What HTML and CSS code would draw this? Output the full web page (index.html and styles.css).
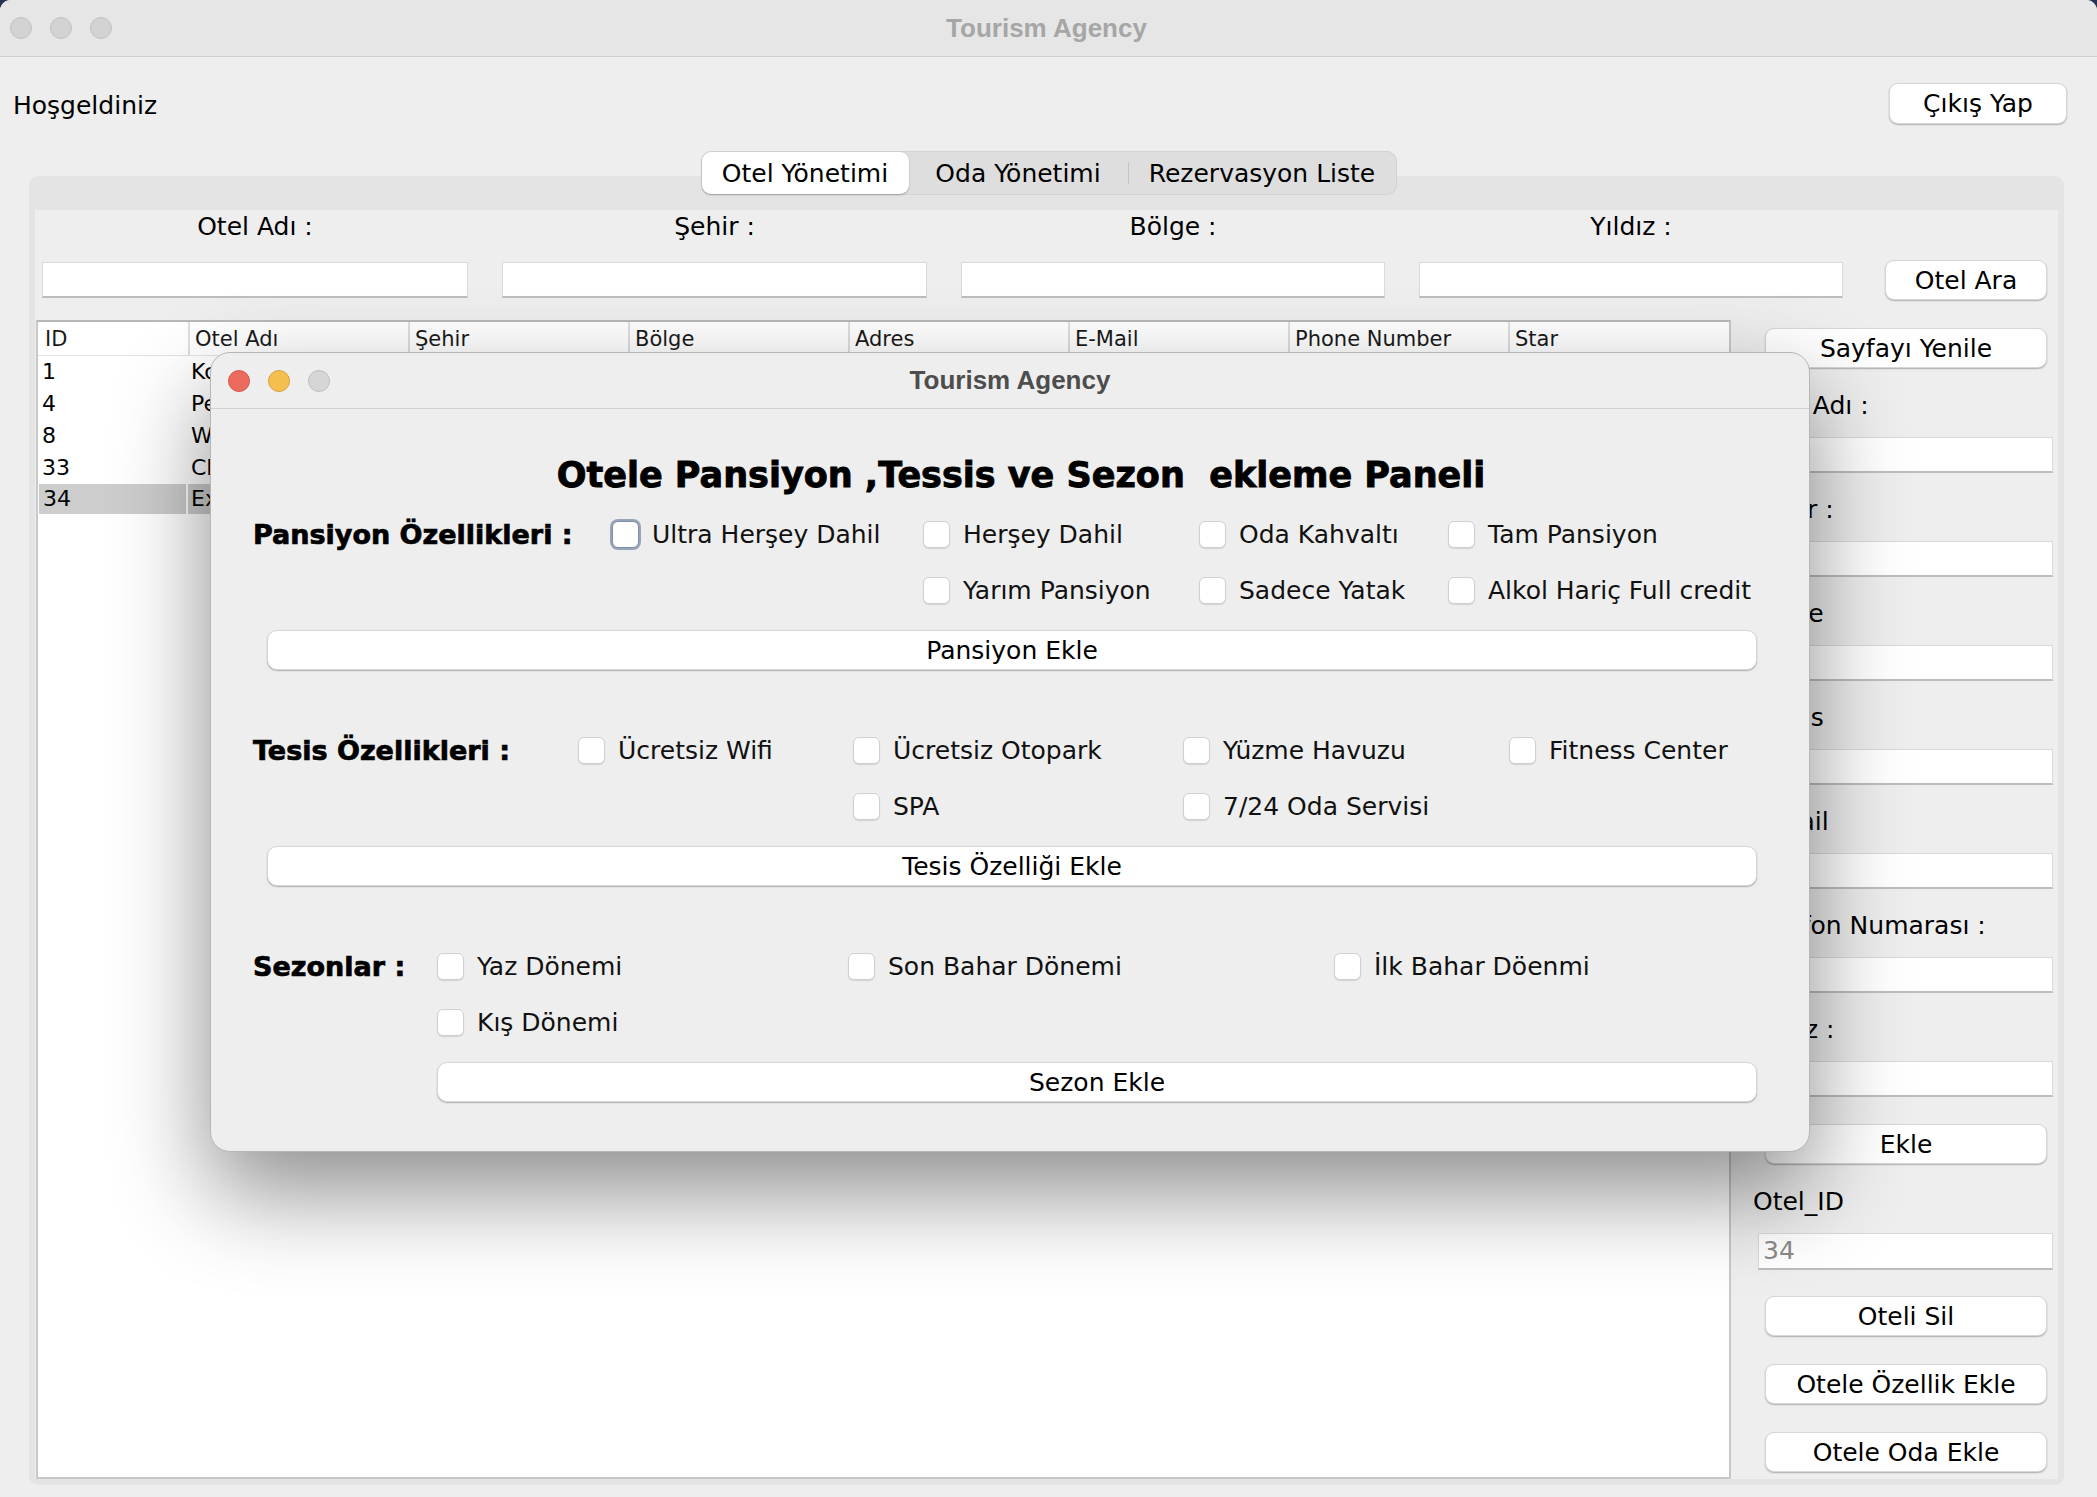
FILE: index.html
```html
<!DOCTYPE html>
<html lang="tr">
<head>
<meta charset="utf-8">
<title>Tourism Agency</title>
<link rel="stylesheet" href="styles.css">
</head>
<body>
<div class="window">
  <header class="titlebar">
    <div class="lights">
      <span class="light"></span>
      <span class="light"></span>
      <span class="light"></span>
    </div>
    <div class="title">Tourism Agency</div>
    <div></div>
  </header>

  <div class="topbar">
    <span class="welcome">Hoşgeldiniz</span>
    <button class="btn logout">Çıkış Yap</button>
  </div>

  <nav class="tabs">
    <div class="seg seg-otel active">Otel Yönetimi</div>
    <div class="seg seg-oda">Oda Yönetimi</div>
    <span class="seg-divider"></span>
    <div class="seg seg-rez">Rezervasyon Liste</div>
  </nav>

  <section class="tabpanel">
    <div class="panel-body">
      <div class="search">
        <div class="search-label">Otel Adı :</div>
        <div class="search-label">Şehir :</div>
        <div class="search-label">Bölge :</div>
        <div class="search-label">Yıldız :</div>
        <div></div>
        <div class="field"></div>
        <div class="field"></div>
        <div class="field"></div>
        <div class="field"></div>
        <button class="btn search-btn">Otel Ara</button>
      </div>

      <div class="main">
        <div class="table">
          <div class="th th-first">ID</div>
          <div class="th">Otel Adı</div>
          <div class="th">Şehir</div>
          <div class="th">Bölge</div>
          <div class="th">Adres</div>
          <div class="th">E-Mail</div>
          <div class="th">Phone Number</div>
          <div class="th">Star</div>

          <div class="td td-first">1</div><div class="td">Konak</div><div class="td"></div><div class="td"></div><div class="td"></div><div class="td"></div><div class="td"></div><div class="td"></div>
          <div class="td td-first">4</div><div class="td">Pera</div><div class="td"></div><div class="td"></div><div class="td"></div><div class="td"></div><div class="td"></div><div class="td"></div>
          <div class="td td-first">8</div><div class="td">Wyndham</div><div class="td"></div><div class="td"></div><div class="td"></div><div class="td"></div><div class="td"></div><div class="td"></div>
          <div class="td td-first">33</div><div class="td">Clarion</div><div class="td"></div><div class="td"></div><div class="td"></div><div class="td"></div><div class="td"></div><div class="td"></div>
          <div class="td td-first sel">34</div><div class="td sel">Example</div><div class="td sel"></div><div class="td sel"></div><div class="td sel"></div><div class="td sel"></div><div class="td sel"></div><div class="td sel"></div>
        </div>

        <aside class="side">
          <button class="btn side-btn refresh">Sayfayı Yenile</button>
          <div class="side-label first-label">Otel Adı :</div>
          <div class="field side-field"></div>
          <div class="side-label">Şehir :</div>
          <div class="field side-field"></div>
          <div class="side-label">Bölge</div>
          <div class="field side-field"></div>
          <div class="side-label">Adres</div>
          <div class="field side-field"></div>
          <div class="side-label">E-Mail</div>
          <div class="field side-field"></div>
          <div class="side-label">Telefon Numarası :</div>
          <div class="field side-field"></div>
          <div class="side-label">Yıldız :</div>
          <div class="field side-field"></div>
          <button class="btn side-btn add">Ekle</button>
          <div class="side-label id-label">Otel_ID</div>
          <div class="field side-field id-field">34</div>
          <button class="btn side-btn del">Oteli Sil</button>
          <button class="btn side-btn act">Otele Özellik Ekle</button>
          <button class="btn side-btn act">Otele Oda Ekle</button>
        </aside>
      </div>
    </div>
  </section>

  <div class="dialog">
    <header class="dlg-titlebar">
      <div class="lights">
        <span class="light red"></span>
        <span class="light yellow"></span>
        <span class="light gray"></span>
      </div>
      <div class="dlg-title">Tourism Agency</div>
      <div></div>
    </header>
    <div class="dlg-body">
      <h1 class="heading">Otele Pansiyon ,Tessis ve Sezon  ekleme Paneli</h1>

      <div class="sec sec-pansiyon">
        <div class="sec-label">Pansiyon Özellikleri :</div>
        <label class="check focused"><span class="cb"></span>Ultra Herşey Dahil</label>
        <label class="check"><span class="cb"></span>Herşey Dahil</label>
        <label class="check"><span class="cb"></span>Oda Kahvaltı</label>
        <label class="check"><span class="cb"></span>Tam Pansiyon</label>
        <label class="check r2 c3"><span class="cb"></span>Yarım Pansiyon</label>
        <label class="check r2 c4"><span class="cb"></span>Sadece Yatak</label>
        <label class="check r2 c5"><span class="cb"></span>Alkol Hariç Full credit</label>
        <button class="btn dlg-btn">Pansiyon Ekle</button>
      </div>

      <div class="sec sec-tesis">
        <div class="sec-label">Tesis Özellikleri :</div>
        <label class="check"><span class="cb"></span>Ücretsiz Wifi</label>
        <label class="check"><span class="cb"></span>Ücretsiz Otopark</label>
        <label class="check"><span class="cb"></span>Yüzme Havuzu</label>
        <label class="check"><span class="cb"></span>Fitness Center</label>
        <label class="check r2 c3"><span class="cb"></span>SPA</label>
        <label class="check r2 c4"><span class="cb"></span>7/24 Oda Servisi</label>
        <button class="btn dlg-btn">Tesis Özelliği Ekle</button>
      </div>

      <div class="sec sec-sezon">
        <div class="sec-label">Sezonlar :</div>
        <label class="check"><span class="cb"></span>Yaz Dönemi</label>
        <label class="check"><span class="cb"></span>Son Bahar Dönemi</label>
        <label class="check"><span class="cb"></span>İlk Bahar Döenmi</label>
        <label class="check r2 c2"><span class="cb"></span>Kış Dönemi</label>
        <button class="btn dlg-btn sezon-btn">Sezon Ekle</button>
      </div>
    </div>
  </div>
</div>
</body>
</html>
```

FILE: styles.css
```css
* { box-sizing: border-box; }

html, body {
  margin: 0;
  padding: 0;
}

body {
  width: 2097px;
  height: 1497px;
  overflow: hidden;
  background: #263352;
  font-family: "DejaVu Sans", "Noto Sans", sans-serif;
  font-size: 25px;
  color: #000;
}

.window {
  position: relative;
  width: 2097px;
  height: 1497px;
  background: #eeeeee;
  border-radius: 11px 11px 0 0;
  overflow: hidden;
  display: flex;
  flex-direction: column;
}

/* ---------- title bars ---------- */
.titlebar {
  flex: none;
  height: 57px;
  display: grid;
  grid-template-columns: 1fr auto 1fr;
  align-items: center;
  padding: 0 10px;
  background: #e6e6e6;
  border-bottom: 1px solid #cfcfcf;
}

.lights {
  display: flex;
  align-items: center;
  gap: 18px;
}

.light {
  width: 22px;
  height: 22px;
  border-radius: 50%;
  background: #d3d3d3;
  border: 1px solid #c3c3c3;
}

.light.red { background: #ed6a5e; border-color: #d5574c; }
.light.yellow { background: #f5bf4f; border-color: #d9a33d; }
.light.gray { background: #d6d6d6; border-color: #bfbfbf; }

.title,
.dlg-title {
  font-family: "Liberation Sans", Arial, sans-serif;
  font-weight: 700;
  font-size: 26px;
  color: #a6a6a6;
}

.title { margin-right: 4px; }

.dlg-title { color: #4d4d4d; }

/* ---------- buttons / fields ---------- */
.btn {
  font: inherit;
  color: #000;
  background: #ffffff;
  border: 1px solid #d6d6d6;
  border-radius: 9px;
  box-shadow: 0 1px 1.5px rgba(0, 0, 0, 0.28);
  padding: 0;
  display: flex;
  align-items: center;
  justify-content: center;
  white-space: nowrap;
}

.field {
  height: 36px;
  background: #ffffff;
  border: 1px solid #dadada;
  border-bottom: 2px solid #bdbdbd;
}

/* ---------- top bar ---------- */
.topbar {
  flex: none;
  display: flex;
  justify-content: space-between;
  align-items: center;
  height: 41px;
  margin: 26px 30px 0 13px;
}

.welcome { padding-top: 3px; }

.logout {
  width: 178px;
  height: 41px;
}

/* ---------- tabs ---------- */
.tabs {
  flex: none;
  align-self: center;
  display: flex;
  align-items: center;
  height: 44px;
  margin-top: 27px;
  background: #dedede;
  border: 1px solid #d3d3d3;
  border-radius: 10px;
  position: relative;
  z-index: 1;
}

.seg {
  height: 42px;
  display: flex;
  align-items: center;
  justify-content: center;
  white-space: nowrap;
}

.seg-otel { width: 207px; }
.seg-oda { width: 219px; }
.seg-rez { width: 267px; }

.seg.active {
  background: #ffffff;
  border-radius: 9px;
  box-shadow: 0 1px 2px rgba(0, 0, 0, 0.28);
}

.seg-divider {
  width: 1px;
  height: 22px;
  background: #c4c4c4;
}

/* ---------- tab panel ---------- */
.tabpanel {
  flex: 1;
  display: flex;
  margin: -19px 33px 12px 29px;
  padding: 34px 6px 6px 6px;
  background: #e4e4e4;
  border-radius: 9px;
  min-height: 0;
}

.panel-body {
  flex: 1;
  display: flex;
  flex-direction: column;
  background: #eeeeee;
  min-height: 0;
}

.search {
  flex: none;
  display: grid;
  grid-template-columns: 426px 425px 424px 424px 170px;
  grid-template-rows: 34px 40px;
  column-gap: 34px;
  row-gap: 16px;
  padding-left: 7px;
}

.search-label {
  text-align: center;
  line-height: 34px;
}

.search .field { align-self: center; }

.search-btn {
  justify-self: end;
  width: 162px;
  height: 40px;
}

.main {
  flex: 1;
  display: grid;
  grid-template-columns: 1695px 301px;
  column-gap: 21px;
  margin-top: 20px;
  padding-left: 1px;
  min-height: 0;
}

/* ---------- table ---------- */
.table {
  background: #ffffff;
  border: 2px solid #c8c8c8;
  border-top-color: #b8b8b8;
  display: grid;
  grid-template-columns: 150px repeat(6, 220px) 1fr;
  grid-template-rows: 34px;
  grid-auto-rows: 32px;
  align-content: start;
  overflow: hidden;
}

.th {
  display: flex;
  align-items: center;
  font-size: 21px;
  line-height: 26px;
  color: #1a1a1a;
  padding-left: 5px;
  border-left: 2px solid #dedede;
  border-bottom: 1px solid #e3e3e3;
  white-space: nowrap;
}

.th-first {
  border-left: none;
  padding-left: 7px;
}

.td {
  font-size: 22px;
  line-height: 32px;
  padding-left: 3px;
  white-space: nowrap;
  overflow: hidden;
}

.td-first { padding-left: 4px; }

.td.sel {
  background: #cdcdcd;
  background-clip: padding-box;
  border-right: 2px solid transparent;
  border-bottom: 2px solid transparent;
  line-height: 30px;
}

.td-first.sel { margin-left: 1px; }

/* ---------- side column ---------- */
.side {
  display: flex;
  flex-direction: column;
}

.side-btn {
  height: 40px;
  margin: 0 6px 0 13px;
  flex: none;
}

.refresh { margin-top: 8px; }

.side-label {
  flex: none;
  height: 34px;
  line-height: 34px;
  margin: 20px 0 0 1px;
  white-space: nowrap;
}

.side-label.first-label { margin-top: 21px; }

.side-field {
  flex: none;
  margin: 14px 0 0 6px;
}

.add { margin-top: 27px; }

.side-label.id-label { margin-top: 21px; }

.id-field {
  height: 37px;
  color: #8a8a8a;
  padding-left: 4px;
  line-height: 34px;
}

.del { margin-top: 26px; }
.act { margin-top: 28px; }

/* ---------- dialog ---------- */
.dialog {
  position: absolute;
  left: 210px;
  top: 352px;
  width: 1600px;
  height: 800px;
  display: flex;
  flex-direction: column;
  background: #eeeeee;
  border: 1px solid #b6b6b6;
  border-radius: 20px;
  box-shadow: 0 40px 95px rgba(0, 0, 0, 0.45);
  z-index: 5;
}

.dlg-titlebar {
  flex: none;
  height: 56px;
  display: grid;
  grid-template-columns: 1fr auto 1fr;
  align-items: center;
  padding: 0 17px;
  border-bottom: 1px solid #d2d2d2;
}

.dlg-body {
  padding: 41px 52px 0 42px;
}

.heading {
  margin: 0;
  padding-left: 32px;
  font-family: "DejaVu Sans", sans-serif;
  font-weight: 700;
  font-size: 35px;
  line-height: 50px;
  text-align: center;
  white-space: pre;
  -webkit-text-stroke: 0.9px #000;
}

.sec {
  display: grid;
  grid-template-rows: 40px 40px 44px;
  row-gap: 16px;
  margin-top: 60px;
}

.sec-pansiyon {
  margin-top: 14px;
  grid-template-columns: 357px 313px 276px 249px 309px;
}

.sec-tesis {
  grid-template-columns: 325px 275px 330px 326px 248px;
}

.sec-sezon {
  grid-template-columns: 184px 411px 486px 423px;
}

.sec-label {
  grid-row: 1;
  grid-column: 1;
  align-self: center;
  font-weight: 700;
  font-size: 27px;
  white-space: nowrap;
  -webkit-text-stroke: 0.7px #000;
}

.check {
  grid-row: 1;
  display: flex;
  align-items: center;
  gap: 13px;
  white-space: nowrap;
  color: #111;
}

.check.r2 { grid-row: 2; }
.check.c2 { grid-column: 2; }
.check.c3 { grid-column: 3; }
.check.c4 { grid-column: 4; }
.check.c5 { grid-column: 5; }

.cb {
  flex: none;
  width: 27px;
  height: 27px;
  background: #ffffff;
  border: 1px solid #d0d0d0;
  border-radius: 6px;
  box-shadow: 0 1px 1px rgba(0, 0, 0, 0.12);
}

.check.focused .cb {
  margin-left: 2px;
  border-color: #7f8ea3;
  box-shadow: 0 0 0 2px #97a5b9;
}

.dlg-btn {
  grid-row: 3;
  grid-column: 1 / -1;
  align-self: end;
  height: 40px;
  margin-left: 14px;
  border-radius: 10px;
}

.sezon-btn {
  grid-column: 2 / -1;
  margin-left: 0;
}
```
